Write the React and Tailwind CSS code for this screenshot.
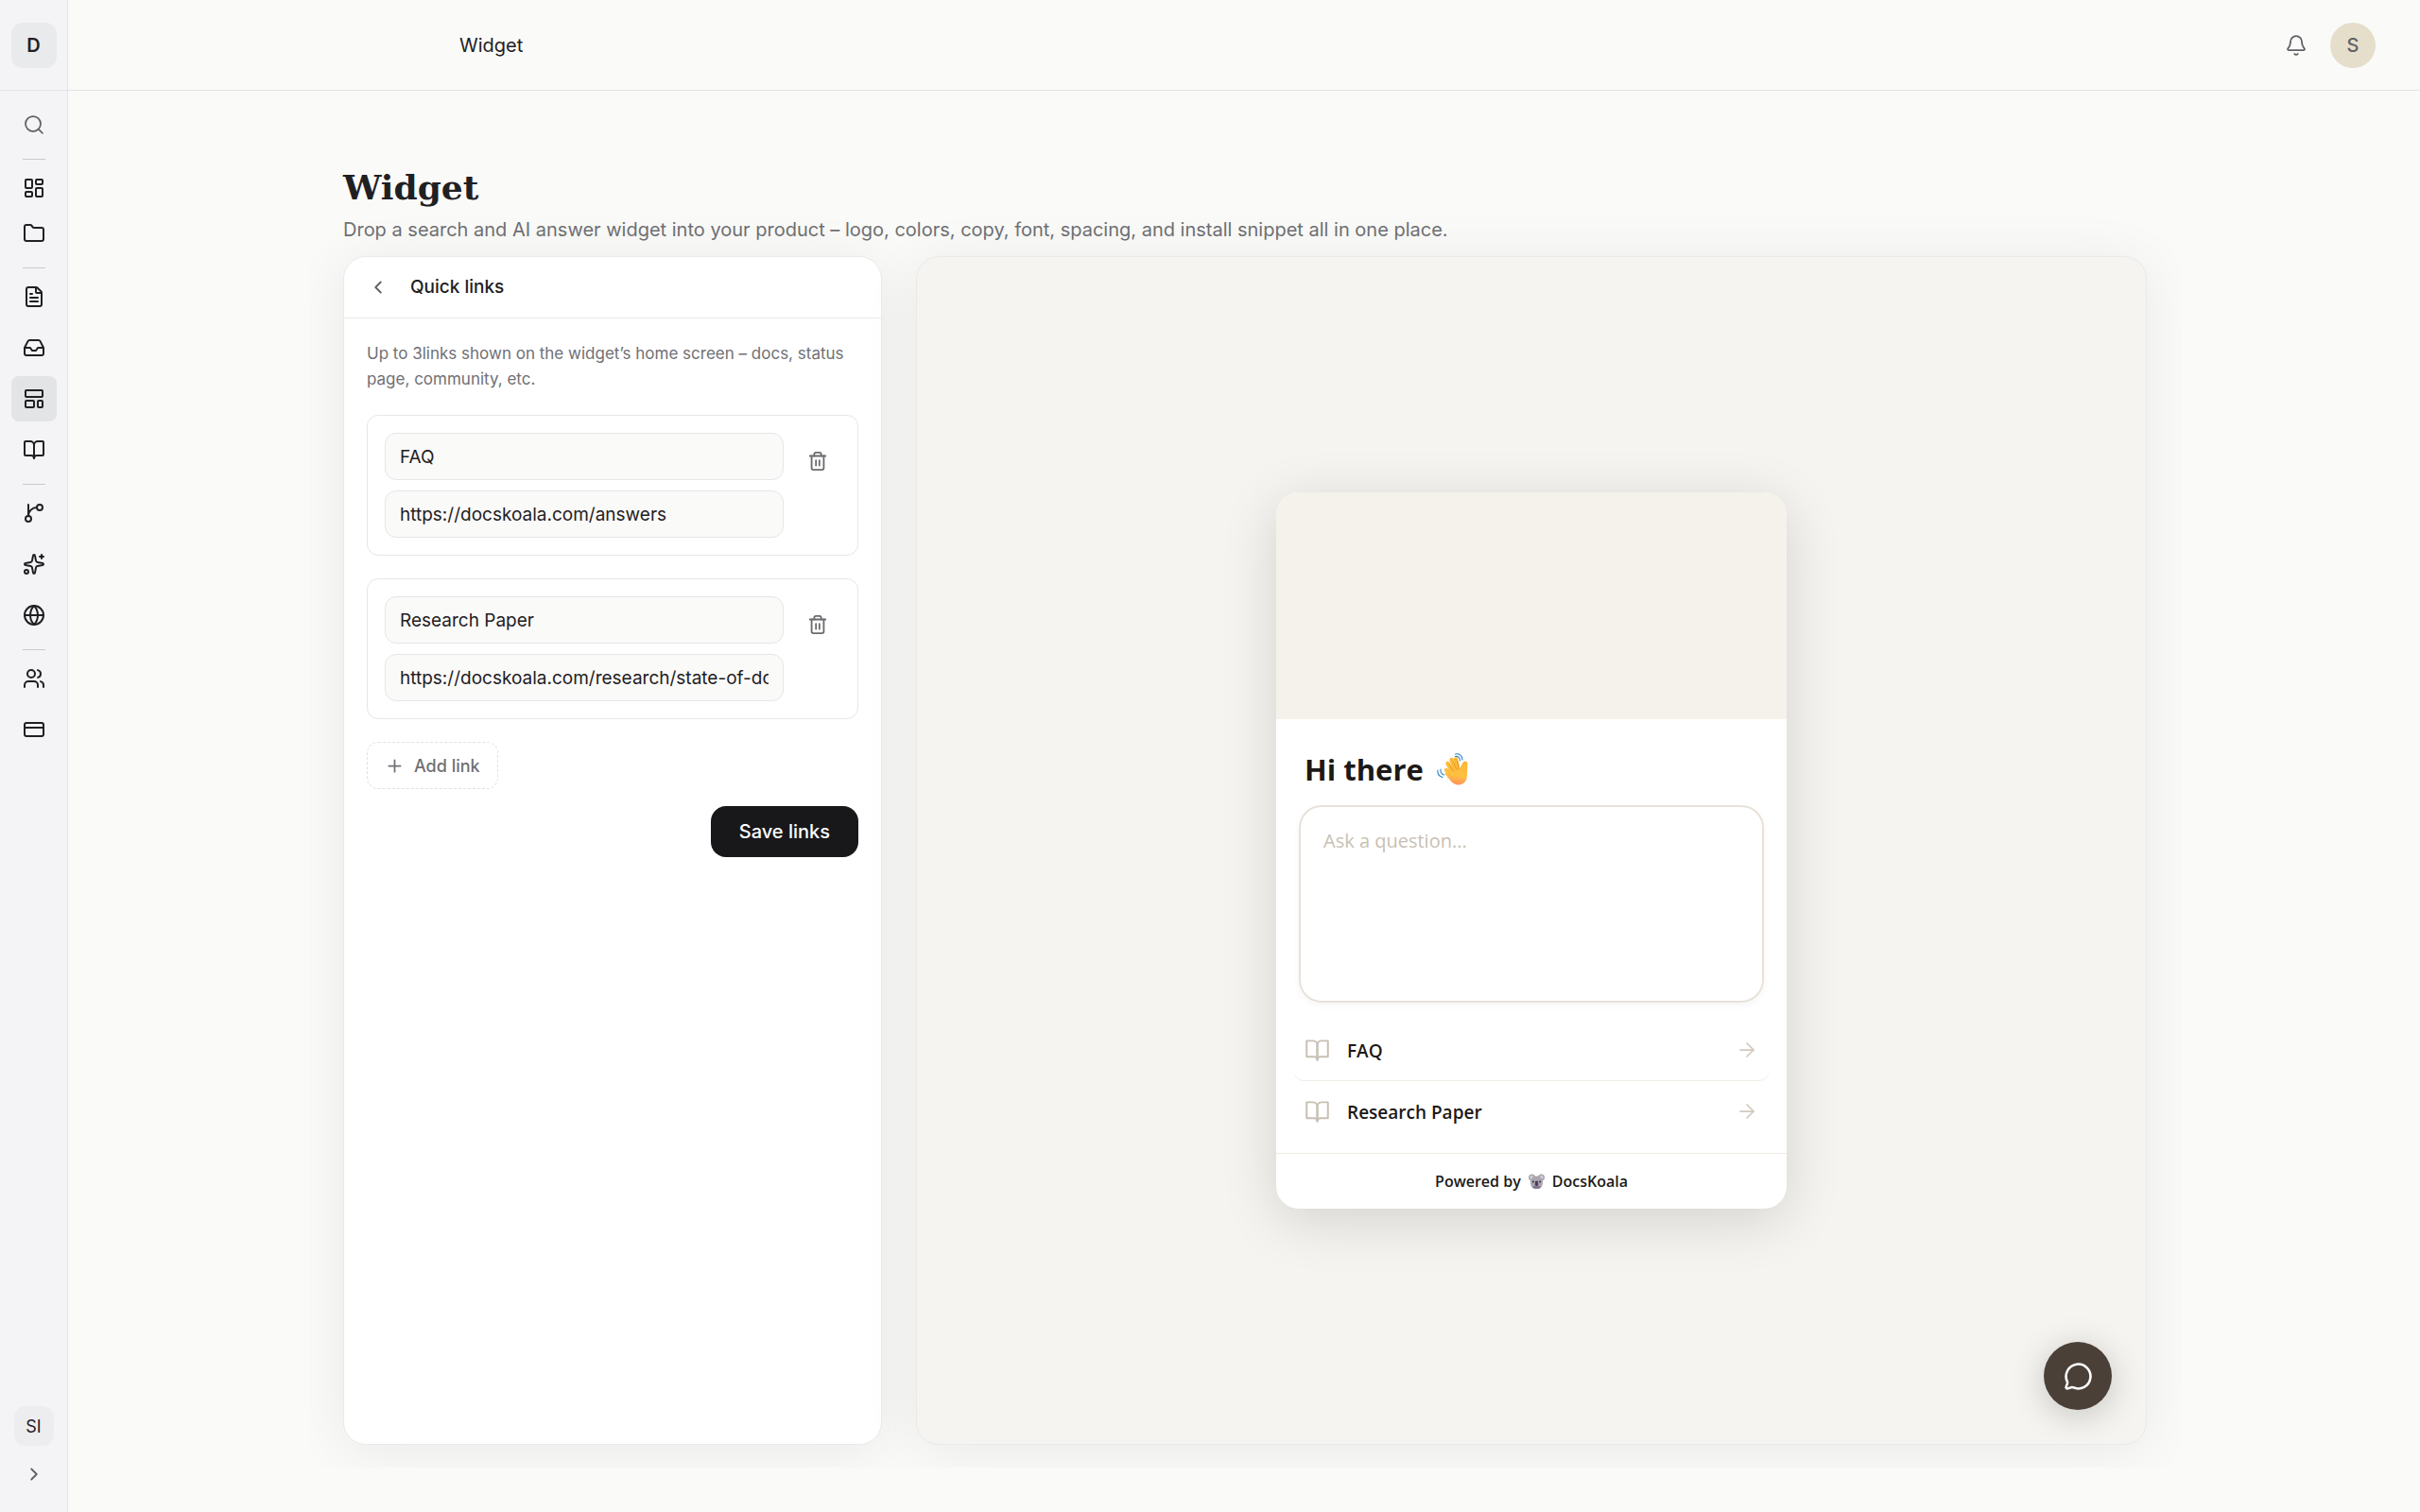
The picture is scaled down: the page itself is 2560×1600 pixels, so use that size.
import { useState } from "react";
import {
  Search,
  LayoutDashboard,
  Folder,
  FileText,
  Inbox,
  LayoutTemplate,
  BookOpen,
  Sparkles,
  Globe,
  Users,
  CreditCard,
  ChevronLeft,
  ChevronRight,
  ArrowRight,
  Bell,
  Plus,
  Trash2,
  MessageCircle,
} from "lucide-react";

const BranchIcon = () => (
  <svg
    width="24"
    height="24"
    viewBox="0 0 24 24"
    fill="none"
    stroke="currentColor"
    strokeWidth="2"
    strokeLinecap="round"
    strokeLinejoin="round"
  >
    <path d="M15 6a9 9 0 0 0-9 9V3" />
    <circle cx="18" cy="6" r="3" />
    <circle cx="6" cy="18" r="3" />
  </svg>
);

const navGroups = [
  {
    gap: "gap-0",
    items: [
      { label: "Dashboard", icon: LayoutDashboard },
      { label: "Projects", icon: Folder },
    ],
  },
  {
    gap: "gap-1.5",
    items: [
      { label: "Articles", icon: FileText },
      { label: "Inbox", icon: Inbox },
      { label: "Widget", icon: LayoutTemplate },
      { label: "Docs", icon: BookOpen },
    ],
  },
  {
    gap: "gap-1.5",
    items: [
      { label: "Sources", icon: BranchIcon },
      { label: "AI", icon: Sparkles },
      { label: "Domains", icon: Globe },
    ],
  },
  {
    gap: "gap-1.5",
    items: [
      { label: "Team", icon: Users },
      { label: "Billing", icon: CreditCard },
    ],
  },
];

const App = () => {
  const [links, setLinks] = useState([
    { label: "FAQ", url: "https://docskoala.com/answers" },
    {
      label: "Research Paper",
      url: "https://docskoala.com/research/state-of-docs",
    },
  ]);

  return (
    <div className="flex min-h-screen bg-[#fafaf8] font-['Inter',sans-serif] text-[#1f2023]">
      <Sidebar />

      <div className="flex min-w-0 flex-1 flex-col">
        <Header />

        <main className="flex flex-1 flex-col pt-[72px] pr-6 pb-[47px] pl-[26px]">
          <div className="mx-auto flex w-full max-w-[1980px] flex-1 flex-col overflow-hidden px-9 pb-6">
            <h1 className="font-['DejaVu_Serif',serif] text-[36px] leading-[60px] font-bold">
              Widget
            </h1>
            <p className="pb-[13px] text-[20px] leading-[30px] text-[#6f7074]">
              Drop a search and AI answer widget into your product – logo,
              colors, copy, font, spacing, and install snippet all in one place.
            </p>

            <div className="flex flex-1 gap-9">
              <QuickLinks links={links} setLinks={setLinks} />
              <Preview links={links} />
            </div>
          </div>
        </main>
      </div>
    </div>
  );
};

export default App;


const Sidebar = () => {
  const [active, setActive] = useState("Widget");

  return (
    <aside className="flex w-[72px] shrink-0 flex-col items-center border-r border-[#e3e3e8] bg-[#f4f4f7]">
      <div className="flex h-24 w-full items-center justify-center border-b border-[#e3e4e6]">
        <button className="h-12 w-12 rounded-xl bg-[#e9eaec] text-[20px] font-semibold">
          D
        </button>
      </div>

      <nav className="flex flex-1 flex-col items-center pt-3">
        <button
          aria-label="Search"
          className="flex h-12 w-12 items-center justify-center text-[#5f6064]"
        >
          <Search size={24} strokeWidth={1.75} />
        </button>

        {navGroups.map((group, i) => (
          <div key={i} className="flex flex-col items-center">
            <hr className="mt-3 mb-1.5 w-6 border-[#c9cacd]" />
            <div className={`flex flex-col ${group.gap}`}>
              {group.items.map(({ label, icon: Icon }) => (
                <button
                  key={label}
                  aria-label={label}
                  onClick={() => setActive(label)}
                  className={`flex h-12 w-12 items-center justify-center rounded-lg ${
                    active === label ? "bg-[#e3e4e6]" : ""
                  }`}
                >
                  <Icon size={24} strokeWidth={2} />
                </button>
              ))}
            </div>
          </div>
        ))}
      </nav>

      <div className="flex flex-col items-center gap-2 pb-[18px]">
        <button className="h-[42px] w-[42px] rounded-xl bg-[#ededf0] text-[18px]">
          SI
        </button>
        <button
          aria-label="Expand sidebar"
          className="flex h-11 w-11 items-center justify-center text-[#5f6064]"
        >
          <ChevronRight size={22} strokeWidth={2} />
        </button>
      </div>
    </aside>
  );
};


const Header = () => {
  return (
    <header className="flex h-24 items-center justify-between border-b border-[#e3e4e6] pr-[47px] pl-[414px]">
      <span className="text-[20px]">Widget</span>

      <div className="flex items-center gap-3">
        <button
          aria-label="Notifications"
          className="flex h-12 w-12 items-center justify-center text-[#5f6064]"
        >
          <Bell size={24} strokeWidth={1.75} />
        </button>
        <button className="h-12 w-12 rounded-full bg-[#e5decb] text-[20px] font-medium text-[#5f6064]">
          S
        </button>
      </div>
    </header>
  );
};


const QuickLinks = ({ links, setLinks }) => {
  const updateLink = (index, field, value) => {
    setLinks(
      links.map((link, i) => (i === index ? { ...link, [field]: value } : link))
    );
  };

  const removeLink = (index) => {
    setLinks(links.filter((_, i) => i !== index));
  };

  const addLink = () => {
    if (links.length < 3) {
      setLinks([...links, { label: "", url: "" }]);
    }
  };

  return (
    <section className="w-[570px] shrink-0 rounded-3xl border border-[#e9eaeb] bg-white shadow-[0_6px_60px_rgba(0,0,0,0.07)]">
      <div className="flex h-[65px] items-center gap-3.5 border-b border-[#e9eaeb] px-4">
        <button
          aria-label="Back"
          className="flex h-10 w-10 items-center justify-center text-[#5f6064]"
        >
          <ChevronLeft size={22} strokeWidth={2} />
        </button>
        <h2 className="text-[19px] font-medium">Quick links</h2>
      </div>

      <div className="flex flex-col gap-6 p-6">
        <p className="text-[17px] leading-[27px] text-[#6f7074]">
          Up to 3links shown on the widget’s home screen – docs, status page,
          community, etc.
        </p>

        {links.map((link, i) => (
          <div
            key={i}
            className="flex gap-3 rounded-xl border border-[#e5e6e8] p-[18px]"
          >
            <div className="flex min-w-0 flex-1 flex-col gap-[11px]">
              <input
                aria-label="Link label"
                value={link.label}
                onChange={(e) => updateLink(i, "label", e.target.value)}
                className="h-[50px] w-full rounded-xl border border-[#e5e6e8] bg-[#fafaf9] px-[15px] text-[19px]"
              />
              <input
                aria-label="Link URL"
                value={link.url}
                onChange={(e) => updateLink(i, "url", e.target.value)}
                className="h-[50px] w-full rounded-xl border border-[#e5e6e8] bg-[#fafaf9] px-[15px] text-[19px]"
              />
            </div>
            <button
              aria-label="Remove link"
              onClick={() => removeLink(i)}
              className="mt-1.5 flex h-12 w-12 items-center justify-center text-[#6b6c70]"
            >
              <Trash2 size={22} strokeWidth={2} />
            </button>
          </div>
        ))}

        <div className="flex flex-col gap-[18px]">
          <button
            onClick={addLink}
            className="flex h-[50px] items-center gap-2.5 self-start rounded-xl border border-dashed border-[#e0e1e3] px-[18px] text-[18px] font-medium text-[#6f7074]"
          >
            <Plus size={21} strokeWidth={2} />
            Add link
          </button>
          <button className="h-[54px] self-end rounded-2xl bg-[#18181b] px-[30px] text-[20px] font-medium text-white">
            Save links
          </button>
        </div>
      </div>
    </section>
  );
};


const Preview = ({ links }) => {
  return (
    <section className="relative flex flex-1 items-center justify-center rounded-3xl border border-[#e9eaeb] bg-[#f5f4f0] shadow-[0_6px_60px_rgba(0,0,0,0.07)]">
      <div className="w-[540px] overflow-hidden rounded-3xl bg-white font-['Open_Sans',sans-serif] text-[#1c1917] shadow-[0_12px_60px_rgba(0,0,0,0.14)]">
        <div className="h-60 bg-[#f5f2eb]" />

        <div className="px-[18px] pt-[30px] pb-3">
          <h3 className="flex items-center gap-3.5 px-3 text-[31px] leading-[46px] font-bold">
            Hi there
            <WavingHand />
          </h3>

          <div className="px-1.5 pt-[15px] pb-[18px]">
            <textarea
              aria-label="Ask a question"
              placeholder="Ask a question..."
              className="block h-[209px] w-full resize-none rounded-3xl border-2 border-[#e8e2da] px-6 py-[21px] text-[20px] leading-[30px] shadow-[0_3px_9px_rgba(0,0,0,0.04)] placeholder:text-[#c8bfb3]"
            />
          </div>

          {links.map((link, i) => (
            <a
              key={i}
              href={link.url}
              className="flex h-16 items-center rounded-xl border-[#f0ebe4] px-3 text-[19px] font-semibold not-last:h-[65px] not-last:border-b"
            >
              <BookIcon />
              <span className="flex-1 pt-0.5 pl-[18px]">{link.label}</span>
              <ArrowRight size={24} strokeWidth={1.75} color="#d2c9bd" />
            </a>
          ))}
        </div>

        <div className="flex h-[59px] items-center justify-center gap-2 border-t border-[#f0ebe4] text-[16px] font-semibold text-[#1c1917]">
          Powered by
          <Koala />
          DocsKoala
        </div>
      </div>

      <button
        aria-label="Open chat"
        className="absolute right-9 bottom-9 flex h-[72px] w-[72px] items-center justify-center rounded-full bg-[#4b4038] text-white shadow-[0_6px_36px_rgba(0,0,0,0.2)]"
      >
        <MessageCircle size={31} strokeWidth={2} />
      </button>
    </section>
  );
};


const BookIcon = () => (
  <svg
    width="27"
    height="27"
    viewBox="0 0 24 24"
    fill="none"
    stroke="#c8bfb3"
    strokeWidth="1.75"
    strokeLinecap="round"
    strokeLinejoin="round"
  >
    <path d="M2 3h6a4 4 0 0 1 4 4v14a3 3 0 0 0-3-3H2z" />
    <path d="M22 3h-6a4 4 0 0 0-4 4v14a3 3 0 0 1 3-3h7z" />
  </svg>
);

const WavingHand = () => (
  <svg width="33" height="34" viewBox="0 0 33 34" fill="none">
    <defs>
      <linearGradient
        id="hand"
        x1="24"
        y1="4"
        x2="19"
        y2="34"
        gradientUnits="userSpaceOnUse"
      >
        <stop offset="0" stopColor="#fcb52c" />
        <stop offset="0.65" stopColor="#ffc042" />
        <stop offset="1" stopColor="#ff8d5c" />
      </linearGradient>
    </defs>
    <g stroke="url(#hand)" strokeWidth="4.4" strokeLinecap="round">
      <path d="M10 18l8 8" />
      <path d="M11.5 11l6 11" />
      <path d="M15.5 7l4.500 13" />
      <path d="M20 6.500l3 13" />
    </g>
    <path
      d="M10 20l9-5 5 1.500 3.500-6.500c1-2.500 5-2 5 1l-.5 13c-.5 6-4 9.500-9 9.500-4.500 0-7-2.500-9.500-5.500L8.500 22z"
      fill="url(#hand)"
    />
    <path
      d="M13.500 12.500l4 7M17.500 9.500l3.500 8M21.500 8.500l2 8.500"
      stroke="#e08f28"
      strokeWidth="0.8"
      strokeLinecap="round"
    />
    <g stroke="#2b84c6" strokeWidth="1.1" strokeLinecap="round">
      <path d="M19.500 1c4-1 7.500 1.500 7.500 6" />
      <path d="M19.500 3.500c3-.5 5 1.500 5 4.500" />
      <path d="M1 18c-.5 3.500 1.500 6.500 5 7.500" />
      <path d="M4 17c-.5 3 1 5 3.500 6" />
    </g>
  </svg>
);

const Koala = () => (
  <svg width="17" height="17" viewBox="0 0 17 17">
    <circle cx="3.5" cy="4" r="3.5" fill="#a8a4ad" />
    <circle cx="13.5" cy="4" r="3.5" fill="#a8a4ad" />
    <circle cx="3.3" cy="4" r="1.9" fill="#d9d2da" />
    <circle cx="13.7" cy="4" r="1.9" fill="#d9d2da" />
    <path
      d="M2 9C2 4.500 4.500 2.500 8.500 2.500S15 4.500 15 9c0 4.500-2 7-6.500 7S2 13.500 2 9z"
      fill="#aaa6b0"
    />
    <ellipse cx="8.5" cy="14.3" rx="4.2" ry="1.8" fill="#85768f" />
    <circle cx="4.9" cy="8.5" r="0.9" fill="#2b2430" />
    <circle cx="12.1" cy="8.5" r="0.9" fill="#2b2430" />
    <rect x="6.9" y="7.5" width="3.2" height="5.6" rx="1.6" fill="#4d3a5c" />
  </svg>
);
